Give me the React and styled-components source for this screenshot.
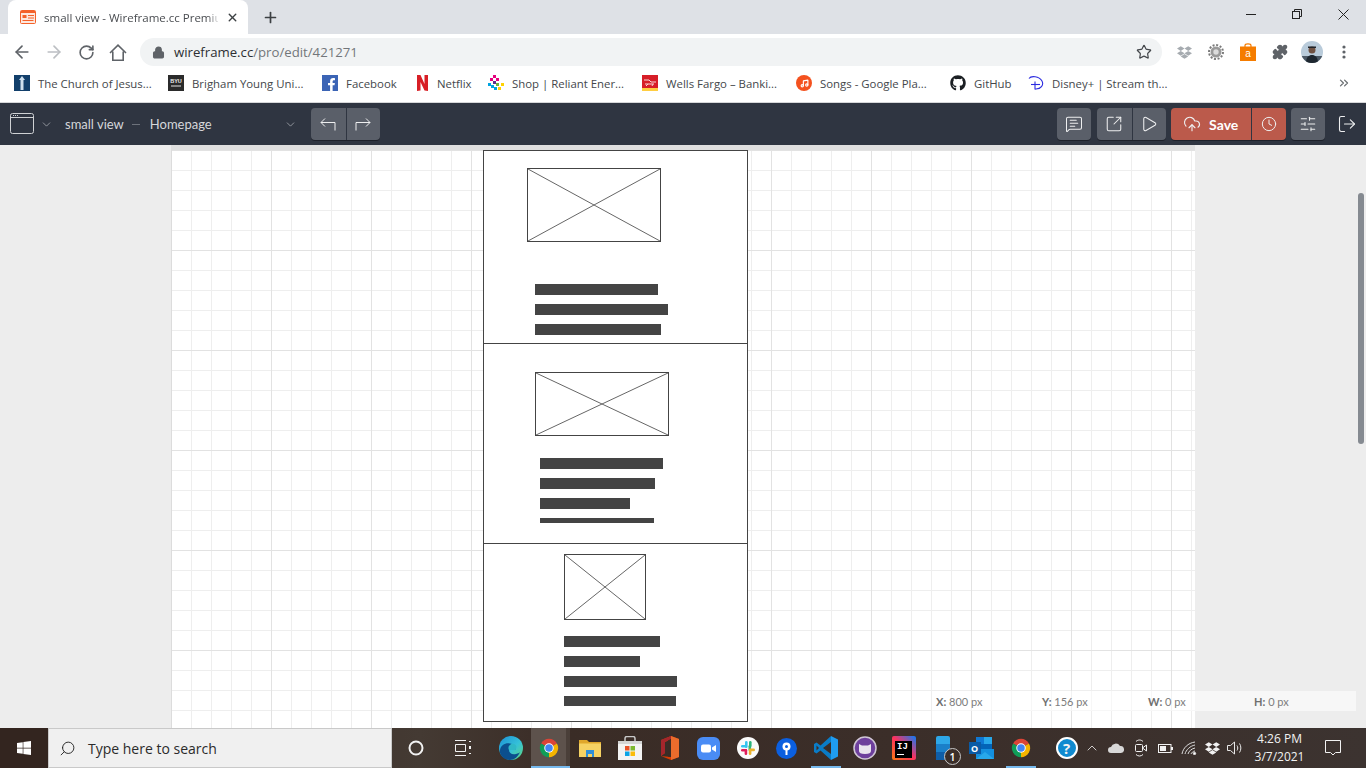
import styled, { createGlobalStyle } from "styled-components";
import {
  ArrowLeft,
  ArrowRight,
  RotateCw,
  Lock,
  Star,
  Puzzle,
  X,
  Plus,
  ChevronDown,
  ChevronUp,
  ChevronsRight,
  MessageSquareText,
  SquareArrowOutUpRight,
  Play,
  CloudUpload,
  Clock,
  SlidersHorizontal,
  LogOut,
  Search,
  Music,
} from "lucide-react";
import { FaGithub, FaDropbox, FaFacebookF, FaWindows } from "react-icons/fa";

const GlobalStyle = createGlobalStyle`
  html, body {
    margin: 0;
    padding: 0;
    overflow: hidden;
    background: #ededed;
  }
  * {
    box-sizing: border-box;
  }
`;

const uiFont = `"Open Sans", "Noto Sans", sans-serif`;

const Page = styled.div`
  width: 1366px;
  height: 768px;
  display: flex;
  flex-direction: column;
  overflow: hidden;
  font-family: ${uiFont};
`;

/* browser chrome */
const TabStrip = styled.div`
  height: 34px;
  flex: none;
  display: flex;
  align-items: center;
  background: #dee1e6;
  padding-left: 8px;
  color: #3c4043;
`;

const Tab = styled.div`
  width: 240px;
  height: 34px;
  display: flex;
  align-items: center;
  background: #fff;
  border-radius: 8px 8px 0 0;
  padding: 0 9px 0 12px;
`;

const TabTitle = styled.span`
  width: 174px;
  margin-left: 8px;
  font-size: 11.5px;
  white-space: nowrap;
  color: #4a4d51;
  mask-image: linear-gradient(to right, #000 164px, transparent 176px);
`;

const NewTab = styled.div`
  display: flex;
  margin-left: 14px;
  color: #3c4043;
`;

const WindowControls = styled.div`
  margin-left: auto;
  display: flex;
  align-self: flex-start;
`;

const WindowButton = styled.div`
  width: 46px;
  height: 28px;
  display: flex;
  align-items: center;
  justify-content: center;
`;

const Toolbar = styled.div`
  height: 32px;
  flex: none;
  display: flex;
  align-items: flex-end;
  background: #fff;
  padding-left: 6px;
`;

const NavButton = styled.div`
  width: 32px;
  height: 28px;
  display: flex;
  align-items: center;
  justify-content: center;
  color: ${(p) => (p.$off ? "#bcbfc3" : "#5f6368")};
`;

const Omnibox = styled.div`
  width: 1022px;
  height: 28px;
  margin-left: 6px;
  margin-right: 6px;
  display: flex;
  align-items: center;
  border-radius: 14px;
  background: #f1f3f4;
  padding: 0 10px 0 12px;
  color: #5f6368;
`;

const Url = styled.span`
  margin-left: 9px;
  font-size: 13.2px;
  color: #72767a;
  strong {
    font-weight: 400;
    color: #2d2f33;
  }
`;

const StarSlot = styled.div`
  margin-left: auto;
  display: flex;
  color: #44474b;
`;

const Extension = styled.div`
  width: 32px;
  height: 28px;
  display: flex;
  align-items: center;
  justify-content: center;
`;

const Bookmarks = styled.div`
  height: 36px;
  flex: none;
  display: flex;
  align-items: center;
  padding: 0 0 2px 14px;
  background: #fff;
`;

const Bookmark = styled.div`
  width: ${(p) => p.$w}px;
  flex: none;
  display: flex;
  align-items: center;
  gap: 8px;
  font-size: 11.4px;
  color: #44474b;
  white-space: nowrap;
`;

const BookmarkIcon = styled.span`
  width: ${(p) => p.$size || 16}px;
  height: 16px;
  flex: none;
  display: flex;
  align-items: center;
  justify-content: center;
  background: ${(p) => p.$bg || "transparent"};
  border-radius: ${(p) => p.$round || 0};
  color: #fff;
`;

const MoreBookmarks = styled.div`
  margin-left: auto;
  margin-right: 15px;
  display: flex;
  color: #6b6f73;
`;

/* wireframe.cc editor bar */
const EditorBar = styled.div`
  height: 43px;
  flex: none;
  display: flex;
  align-items: center;
  border-top: 1px solid #d6d7d9;
  background: #2f3541;
  padding-left: 10px;
  font-family: Lato, ${uiFont};
  color: #d5d7da;
  box-shadow: 0 1px 1px rgba(0, 0, 0, 0.3);
  position: relative;
`;

const PageName = styled.span`
  font-size: 13px;
  margin-left: ${(p) => p.$gap}px;
`;

const Dash = styled.span`
  width: 8px;
  height: 1px;
  margin-left: 8px;
  background: #6d727b;
`;

const Caret = styled.span`
  display: flex;
  margin-left: ${(p) => p.$gap}px;
  color: #c3c6ca;
`;

const ButtonGroup = styled.div`
  height: 32px;
  display: flex;
  margin-left: ${(p) => p.$gap}px;
  border-radius: 4px;
  overflow: hidden;
  background: ${(p) => (p.$save ? "#bb5a4b" : "#5a5f69")};
  box-shadow: 0 1px 0 #1d212a;
`;

const ToolButton = styled.div`
  width: ${(p) => p.$w || 34}px;
  display: flex;
  align-items: center;
  justify-content: center;
  gap: 8px;
  font-size: 14px;
  font-weight: 700;
  color: #fff;
  & + & {
    border-left: 1px solid #2f3541;
  }
  svg {
    color: #eeeff0;
  }
`;

const ExitButton = styled.div`
  display: flex;
  margin-left: 12px;
  color: #eeeff0;
`;

/* drawing area */
const Workspace = styled.div`
  flex: 1;
  min-height: 0;
  display: flex;
  background: #ededed;
  padding-left: 171px;
  position: relative;
`;

const CanvasColumn = styled.div`
  width: 1024px;
  padding-top: 5px;
  background: #dfdfdf;
`;

const Canvas = styled.div`
  position: relative;
  height: 100%;
  overflow: hidden;
  border-left: 1px solid #dcdcdc;
  background-color: #fff;
  background-image:
    linear-gradient(to right, #e2e2e2 1px, transparent 1px),
    linear-gradient(to bottom, #e2e2e2 1px, transparent 1px),
    linear-gradient(to right, #eeeeee 1px, transparent 1px),
    linear-gradient(to bottom, #eeeeee 1px, transparent 1px);
  background-size: 100px 100px, 100px 100px, 20px 20px, 20px 20px;
  background-position: -1px 0, -1px 0, -1px 0, -1px 0;
`;

const WireFrame = styled.div`
  position: absolute;
  left: ${(p) => p.$x - 172}px;
  top: ${(p) => p.$y - 150}px;
  width: ${(p) => p.$w}px;
  height: ${(p) => p.$h}px;
  border: 1px solid #444;
  background: #fff;
`;

const WireLine = styled.div`
  position: absolute;
  left: ${(p) => p.$x - 172}px;
  top: ${(p) => p.$y - 150}px;
  width: ${(p) => p.$w}px;
  height: 1px;
  background: #444;
`;

const WireBar = styled.div`
  position: absolute;
  left: ${(p) => p.$x - 172}px;
  top: ${(p) => p.$y - 150}px;
  width: ${(p) => p.$w}px;
  height: ${(p) => p.$h}px;
  background: #444;
`;

const WireImage = styled.svg`
  position: absolute;
  left: ${(p) => p.$x - 172}px;
  top: ${(p) => p.$y - 150}px;
  border: 1px solid #444;
  background: #fff;
`;

const Readout = styled.div`
  position: absolute;
  left: 932px;
  top: 546px;
  width: 424px;
  height: 20px;
  display: flex;
  align-items: center;
  padding-top: 1px;
  background: rgba(255, 255, 255, 0.55);
  font-family: Lato, ${uiFont};
  font-size: 11px;
  color: #7d7d7d;
`;

const ReadoutCell = styled.span`
  width: 106px;
  padding-left: 4px;
  b {
    color: #6f6f6f;
  }
`;

const ScrollThumb = styled.div`
  position: absolute;
  left: 1358px;
  top: 48px;
  width: 6px;
  height: 251px;
  border-radius: 3px;
  background: #858a91;
`;

/* windows taskbar */
const Taskbar = styled.div`
  height: 40px;
  flex: none;
  display: flex;
  align-items: stretch;
  background: linear-gradient(to right, #33251f 0, #33251f 48px, #443a33 420px, #3a2c26 560px, #3b2e29 900px, #3c3330 100%);
  color: #fff;
`;

const StartButton = styled.div`
  width: 48px;
  flex: none;
  display: flex;
  align-items: center;
  justify-content: center;
`;

const SearchBox = styled.div`
  width: 344px;
  flex: none;
  display: flex;
  align-items: center;
  padding-left: 10px;
  background: #f0f0f0;
  border: 1px solid #c9c9c9;
  color: #2b2b2b;
  font-size: 14px;
`;

const SearchText = styled.span`
  margin-left: 12px;
`;

const Slot = styled.div`
  width: ${(p) => p.$w || 39}px;
  flex: none;
  display: flex;
  align-items: center;
  justify-content: center;
  position: relative;
  padding-left: ${(p) => p.$pl || 0}px;
  padding-right: ${(p) => p.$pr || 0}px;
  background: ${(p) => (p.$active ? "linear-gradient(to right, #5d524c 35px, #4a3f39 35px)" : "transparent")};
  &::after {
    content: "";
    display: ${(p) => (p.$open || p.$active ? "block" : "none")};
    position: absolute;
    bottom: 0;
    left: ${(p) => (p.$active ? 0 : 5)}px;
    right: ${(p) => (p.$active ? 0 : 4)}px;
    height: 2px;
    background: #76b9ed;
  }
`;

const Tray = styled.div`
  margin-left: auto;
  display: flex;
  align-items: stretch;
  padding-right: 8px;
  color: #f2f2f2;
`;

const ClockText = styled.div`
  width: 65px;
  display: flex;
  flex-direction: column;
  align-items: center;
  justify-content: center;
  gap: 4px;
  font-size: 12px;
  line-height: 14px;
  text-align: center;
`;

const ChromeLogo = ({ size = 22 }) => (
  <svg width={size} height={size} viewBox="0 0 24 24">
    <path d="M12 12 3.34 7A10 10 0 0 1 20.66 7Z" fill="#db4437" />
    <path d="M12 12V22A10 10 0 0 1 3.34 7Z" fill="#0f9d58" />
    <path d="M12 12 20.66 7A10 10 0 0 1 12 22Z" fill="#f4b400" />
    <circle cx="12" cy="12" r="5.2" fill="#fff" />
    <circle cx="12" cy="12" r="4.1" fill="#4285f4" />
  </svg>
);

const EdgeLogo = () => (
  <svg width="24" height="24" viewBox="0 0 24 24">
    <defs>
      <linearGradient id="edgeFill" x1="0" y1="0" x2="1" y2="1">
        <stop offset="0" stopColor="#1c8fd6" />
        <stop offset="0.55" stopColor="#35c1d8" />
        <stop offset="1" stopColor="#5fd87c" />
      </linearGradient>
    </defs>
    <circle cx="12" cy="12" r="12" fill="url(#edgeFill)" />
    <path d="M1 14C2 8 8 6 13 8c3 1.300 4 4 3 6h-6c0 3 3 5 7 4 2-.5 3-1 4-2-2 5-6 8-10 8C5 24 0 19 1 14Z" fill="#0c4f8e" />
    <path d="M10 14c-2-4 2-7 5-6 3 1 3 4 1 6Z" fill="#2fb8c6" />
  </svg>
);

const FolderLogo = () => (
  <svg width="22" height="18" viewBox="0 0 22 18">
    <path d="M0 1h8l2 2h12v15H0Z" fill="#e0a72b" />
    <path d="M0 4.500h22V18H0Z" fill="#f6d263" />
    <path d="M7 11h8v7h-2v-3H9v3H7Z" fill="#2f8fd8" />
  </svg>
);

const StoreLogo = () => (
  <svg width="24" height="24" viewBox="0 0 24 24">
    <path d="M7 6V2.500C7 1 8 .5 9 .5h6c1 0 2 .5 2 2V6" fill="none" stroke="#c8c8c8" strokeWidth="1.500" />
    <path d="M0 5h24v19H0Z" fill="#f3f3f3" />
    <path d="M0 5h24v3H0Z" fill="#d5d5d5" />
    <rect x="7" y="10" width="4.500" height="4.500" fill="#e8532a" />
    <rect x="12.500" y="10" width="4.500" height="4.500" fill="#7cb82f" />
    <rect x="7" y="15.500" width="4.500" height="4.500" fill="#0aa3e6" />
    <rect x="12.500" y="15.500" width="4.500" height="4.500" fill="#fbbc09" />
  </svg>
);

const OfficeLogo = () => (
  <svg width="20" height="24" viewBox="0 0 20 24">
    <path d="M11 0 19 3V21L11 24 1 20 11 21V3L5 6V17L1 20V4Z" fill="#d83b01" />
    <path d="M11 0 19 3V21L11 24Z" fill="#eb6c2c" />
    <path d="M11 3 5 6V17L1 20V4L11 0Z" fill="#a4262c" />
    <path d="M11 3V21L8 20.500V4.500Z" fill="#3a2c26" />
  </svg>
);

const ZoomLogo = () => (
  <svg width="23" height="23" viewBox="0 0 23 23">
    <rect width="23" height="23" rx="6" fill="#4a8cf5" />
    <rect x="4" y="7.500" width="10" height="8" rx="2" fill="#fff" />
    <path d="M15 10.500 19 8v7l-4-2.500Z" fill="#fff" />
  </svg>
);

const SlackLogo = () => (
  <svg width="22" height="22" viewBox="0 0 22 22">
    <circle cx="11" cy="11" r="11" fill="#fbfbfb" />
    <rect x="8" y="4" width="2.600" height="7" rx="1.300" fill="#36c5f0" />
    <rect x="4" y="8" width="6" height="2.600" rx="1.300" fill="#36c5f0" />
    <rect x="11.500" y="8" width="2.600" height="6" rx="1.300" fill="#2eb67d" />
    <rect x="12" y="4" width="2.600" height="6" rx="1.300" fill="#2eb67d" />
    <rect x="12" y="11.600" width="6" height="2.600" rx="1.300" fill="#ecb22e" />
    <rect x="11.800" y="12" width="2.600" height="6" rx="1.300" fill="#ecb22e" />
    <rect x="4" y="12" width="6" height="2.600" rx="1.300" fill="#e01e5a" />
    <rect x="7.600" y="12" width="2.600" height="6" rx="1.300" fill="#e01e5a" />
  </svg>
);

const PinLogo = () => (
  <svg width="21" height="21" viewBox="0 0 21 21">
    <circle cx="10.500" cy="10.500" r="10.500" fill="#0b5fe0" />
    <circle cx="10.500" cy="8.500" r="4" fill="#fff" />
    <circle cx="10.500" cy="8.500" r="1.500" fill="#0b5fe0" />
    <rect x="9.500" y="11" width="2" height="6" fill="#fff" />
  </svg>
);

const CodeLogo = () => (
  <svg width="24" height="24" viewBox="0 0 24 24">
    <path d="M17 0 24 3.500V20.500L17 24Z" fill="#1f9cf0" />
    <path d="M17 0V6L9 12 17 18V24L6.500 14.500 2.500 17.500 0 16V8L2.500 6.500 6.500 9.500Z" fill="#0a7cc7" />
    <path d="M2.500 9.500 5 12 2.500 14.500Z" fill="#3a2c26" />
    <path d="M17 8.500V15.500L12.500 12Z" fill="#3a2c26" />
  </svg>
);

const CatLogo = () => (
  <svg width="24" height="24" viewBox="0 0 24 24">
    <circle cx="12" cy="12" r="11" fill="#6d3f9c" stroke="#cfc6d4" strokeWidth="1.500" />
    <path d="M6 8 9 9.500h6L18 8v7c0 2-2 3-6 3s-6-1-6-3Z" fill="#e9e4ee" />
  </svg>
);

const IdeaBox = styled.div`
  width: 24px;
  height: 24px;
  display: flex;
  align-items: flex-end;
  justify-content: center;
  padding-bottom: 2px;
  border-radius: 2px;
  background: linear-gradient(45deg, #f97a12 0, #fe315d 50%, #087cfa 100%);
`;

const IdeaText = styled.span`
  width: 17px;
  height: 17px;
  padding: 2px;
  background: #000;
  font-family: "Liberation Mono", monospace;
  font-size: 9px;
  font-weight: 700;
  line-height: 9px;
  color: #fff;
  &::after {
    content: "";
    display: block;
    width: 7px;
    height: 1px;
    margin-top: 2px;
    background: #fff;
  }
`;

const IdeaLogo = () => (
  <IdeaBox>
    <IdeaText>IJ</IdeaText>
  </IdeaBox>
);

const PhoneBadge = styled.span`
  position: absolute;
  right: 1px;
  bottom: 3px;
  width: 17px;
  height: 17px;
  display: flex;
  align-items: center;
  justify-content: center;
  border-radius: 50%;
  border: 1px solid #c8c8c8;
  background: #3b2e29;
  font-size: 10.5px;
  font-weight: 600;
`;

const PhoneLogo = () => (
  <svg width="14" height="24" viewBox="0 0 14 24">
    <rect width="14" height="24" rx="2" fill="#2ea7e8" />
    <rect y="8" width="14" height="8" fill="#1a7fc9" />
    <rect y="16" width="14" height="8" fill="#0f5ea8" />
  </svg>
);

const OutlookWrap = styled.div`
  position: relative;
  width: 24px;
  height: 22px;
`;

const OutlookMark = styled.span`
  position: absolute;
  left: -1px;
  top: 5px;
  width: 12px;
  height: 12px;
  display: flex;
  align-items: center;
  justify-content: center;
  background: #0a5ba6;
  font-size: 9px;
  font-weight: 700;
`;

const OutlookLogo = () => (
  <OutlookWrap>
    <svg width="24" height="22" viewBox="0 0 24 22">
      <rect x="6" width="16" height="8" fill="#0f78d4" />
      <rect x="14" width="8" height="8" fill="#28a8ea" />
      <rect x="6" y="7" width="16" height="8" fill="#0364b8" />
      <path d="M6 12 24 12V22H6Z" fill="#1490df" />
      <path d="M6 22 15 15 24 22Z" fill="#28a8ea" />
    </svg>
    <OutlookMark>O</OutlookMark>
  </OutlookWrap>
);

const HelpMark = styled.span`
  width: 22px;
  height: 22px;
  display: flex;
  align-items: center;
  justify-content: center;
  border-radius: 50%;
  border: 2px solid #fff;
  background: #0f8ad0;
  font-size: 15px;
  font-weight: 700;
`;

const screens = {
  images: [
    { x: 527, y: 168, w: 134, h: 74 },
    { x: 535, y: 372, w: 134, h: 64 },
    { x: 564, y: 554, w: 82, h: 66 },
  ],
  bars: [
    { x: 535, y: 284, w: 123, h: 11 },
    { x: 535, y: 304, w: 133, h: 11 },
    { x: 535, y: 324, w: 126, h: 11 },
    { x: 540, y: 458, w: 123, h: 11 },
    { x: 540, y: 478, w: 115, h: 11 },
    { x: 540, y: 498, w: 90, h: 11 },
    { x: 540, y: 518, w: 114, h: 5 },
    { x: 564, y: 636, w: 96, h: 11 },
    { x: 564, y: 656, w: 76, h: 11 },
    { x: 564, y: 676, w: 113, h: 11 },
    { x: 564, y: 696, w: 112, h: 10 },
  ],
};

const bookmarks = [
  {
    w: 154,
    label: "The Church of Jesus...",
    icon: (
      <BookmarkIcon $bg="#123f6b">
        <svg width="10" height="14" viewBox="0 0 10 14">
          <path d="M5 0 8 4H6.500V14h-3V4H2Z" fill="#cfe0ee" />
        </svg>
      </BookmarkIcon>
    ),
  },
  {
    w: 154,
    label: "Brigham Young Uni...",
    icon: (
      <BookmarkIcon $bg="#2b2b2b">
        <svg width="16" height="16" viewBox="0 0 16 16">
          <text x="8" y="8" fontSize="5.500" fontWeight="700" fill="#eee" textAnchor="middle" fontFamily="Liberation Sans">BYU</text>
          <rect x="3" y="10" width="10" height="2" fill="#888" />
        </svg>
      </BookmarkIcon>
    ),
  },
  {
    w: 93,
    label: "Facebook",
    icon: (
      <BookmarkIcon $bg="#3b64b5">
        <FaFacebookF size={13} style={{ marginTop: 3, marginLeft: 3 }} />
      </BookmarkIcon>
    ),
  },
  {
    w: 73,
    label: "Netflix",
    icon: (
      <BookmarkIcon $size={14}>
        <svg width="11" height="16" viewBox="0 0 11 16">
          <path d="M0 0h3.500L7.500 9V0H11v16l-3.500-.5L3.500 7v8.500L0 16Z" fill="#d81f26" />
        </svg>
      </BookmarkIcon>
    ),
  },
  {
    w: 154,
    label: "Shop | Reliant Ener...",
    icon: (
      <BookmarkIcon>
        <svg width="16" height="16" viewBox="0 0 16 16">
          <rect x="5" y="0" width="3" height="3" fill="#e6007e" />
          <rect x="2" y="3" width="3" height="3" fill="#e6007e" />
          <rect x="8" y="3" width="3" height="3" fill="#e6007e" />
          <rect x="5" y="6" width="3" height="3" fill="#5b2d8e" />
          <rect x="0" y="8" width="3" height="3" fill="#00a3e0" />
          <rect x="3" y="10" width="3" height="3" fill="#00a3e0" />
          <rect x="6" y="12" width="3" height="3" fill="#00a3e0" />
          <rect x="8" y="8" width="3" height="3" fill="#6cb33f" />
          <rect x="13" y="8" width="3" height="3" fill="#ffd200" />
          <rect x="10" y="12" width="3" height="3" fill="#ffd200" />
        </svg>
      </BookmarkIcon>
    ),
  },
  {
    w: 154,
    label: "Wells Fargo – Banki...",
    icon: (
      <BookmarkIcon $bg="#d71e28">
        <svg width="16" height="16" viewBox="0 0 16 16">
          <path d="M2 5h5l2 2h5M3 9h9M4 11l2-2M10 11l1-2" stroke="#f6d6d6" strokeWidth="1" fill="none" />
          <rect y="13" width="16" height="3" fill="#ffcd41" />
        </svg>
      </BookmarkIcon>
    ),
  },
  {
    w: 154,
    label: "Songs - Google Pla...",
    icon: (
      <BookmarkIcon $bg="#f4511e" $round="50%">
        <Music size={9} strokeWidth={3} />
      </BookmarkIcon>
    ),
  },
  {
    w: 78,
    label: "GitHub",
    icon: (
      <BookmarkIcon>
        <FaGithub size={16} color="#1b1f23" />
      </BookmarkIcon>
    ),
  },
  {
    w: 160,
    label: "Disney+ | Stream th...",
    icon: (
      <BookmarkIcon>
        <svg width="16" height="16" viewBox="0 0 16 16" fill="none" stroke="#2b2be0" strokeWidth="1.100">
          <path d="M1 3.500C3 .5 11 1 14 6c2 4-1 8.500-7 8" />
          <path d="M7 6.500V14.500" />
          <path d="M3 9.500h9" />
        </svg>
      </BookmarkIcon>
    ),
  },
];

export default function App() {
  return (
    <Page>
      <GlobalStyle />

      <TabStrip>
        <Tab>
          <svg width="16" height="14" viewBox="0 0 16 14">
            <rect x="0.5" y="0.5" width="15" height="13" rx="1" fill="#fde8df" stroke="#f4622a" />
            <rect x="1" y="1" width="14" height="2" fill="#f4622a" />
            <rect x="2.500" y="5" width="4" height="3" fill="#f4622a" />
            <rect x="8" y="5" width="6" height="1" fill="#f4622a" />
            <rect x="8" y="7.500" width="6" height="1" fill="#f4622a" />
            <rect x="2.500" y="10" width="11" height="1" fill="#f4622a" />
          </svg>
          <TabTitle>small view - Wireframe.cc Premiu</TabTitle>
          <X size={13} strokeWidth={2.6} style={{ marginLeft: 8 }} />
        </Tab>
        <NewTab>
          <Plus size={17} strokeWidth={2.4} />
        </NewTab>
        <WindowControls>
          <WindowButton>
            <svg width="10" height="10" viewBox="0 0 10 10"><path d="M0 5.500h10" stroke="#222" /></svg>
          </WindowButton>
          <WindowButton>
            <svg width="10" height="10" viewBox="0 0 10 10" fill="none" stroke="#222">
              <rect x="0.5" y="2.500" width="7" height="7" />
              <path d="M2.500 2.500V.5h7v7h-2" />
            </svg>
          </WindowButton>
          <WindowButton>
            <svg width="11" height="11" viewBox="0 0 11 11"><path d="M.5.5l10 10M10.500.5l-10 10" stroke="#222" /></svg>
          </WindowButton>
        </WindowControls>
      </TabStrip>

      <Toolbar>
        <NavButton><ArrowLeft size={20} strokeWidth={2} /></NavButton>
        <NavButton $off><ArrowRight size={20} strokeWidth={2} /></NavButton>
        <NavButton><RotateCw size={17} strokeWidth={2.3} /></NavButton>
        <NavButton>
          <svg width="18" height="17" viewBox="0 0 18 17" fill="none" stroke="#5f6368" strokeWidth="1.600">
            <path d="M1 9 9 1.200 17 9M3.800 7.500v8.700h10.400V7.500" />
          </svg>
        </NavButton>
        <Omnibox>
          <Lock size={13} strokeWidth={2.4} fill="#5f6368" />
          <Url><strong>wireframe.cc</strong>/pro/edit/421271</Url>
          <StarSlot><Star size={16} strokeWidth={1.8} /></StarSlot>
        </Omnibox>
        <Extension>
          <FaDropbox size={15} color="#a6abb0" />
        </Extension>
        <Extension>
          <svg width="16" height="16" viewBox="0 0 16 16">
            <circle cx="8" cy="8" r="7" fill="none" stroke="#7a7a7a" strokeWidth="2" strokeDasharray="2 1.660" />
            <circle cx="8" cy="8" r="5.500" fill="#9a9a9a" />
            <circle cx="8" cy="8" r="2.700" fill="#dcdcdc" />
          </svg>
        </Extension>
        <Extension>
          <svg width="16" height="18" viewBox="0 0 16 18">
            <path d="M5 4V2.500C5 1 6 .8 8 .8s3 .2 3 1.700V4" fill="none" stroke="#f57c00" strokeWidth="1.200" />
            <rect y="3.500" width="16" height="14.500" fill="#f57c00" />
            <text x="8" y="14" fontSize="10" fill="#fff" textAnchor="middle" fontFamily="Liberation Sans">a</text>
          </svg>
        </Extension>
        <Extension>
          <Puzzle size={16} color="#5f6368" fill="#5f6368" />
        </Extension>
        <Extension>
          <svg width="22" height="22" viewBox="0 0 22 22">
            <defs>
              <clipPath id="avatarClip"><circle cx="11" cy="11" r="11" /></clipPath>
            </defs>
            <g clipPath="url(#avatarClip)">
              <rect width="22" height="22" fill="#b9cbda" />
              <rect y="15" width="22" height="7" fill="#4c5966" />
              <circle cx="11" cy="9" r="3.500" fill="#6f5142" />
              <path d="M7 7h8V5.500H7Z" fill="#20242a" />
              <path d="M5 22c0-6 3-8 6-8s6 2 6 8Z" fill="#1e2730" />
            </g>
          </svg>
        </Extension>
        <Extension>
          <svg width="4" height="14" viewBox="0 0 4 14" fill="#5f6368">
            <circle cx="2" cy="2" r="1.600" />
            <circle cx="2" cy="7" r="1.600" />
            <circle cx="2" cy="12" r="1.600" />
          </svg>
        </Extension>
      </Toolbar>

      <Bookmarks>
        {bookmarks.map((b) => (
          <Bookmark key={b.label} $w={b.w}>
            {b.icon}
            {b.label}
          </Bookmark>
        ))}
        <MoreBookmarks><ChevronsRight size={14} strokeWidth={2.2} /></MoreBookmarks>
      </Bookmarks>

      <EditorBar>
        <svg width="24" height="22" viewBox="0 0 24 22" fill="none" stroke="#cfd1d4" strokeWidth="1">
          <rect x="0.5" y="0.5" width="23" height="20" rx="2" />
          <path d="M1 4.500h22" />
          <path d="M3 2.500h1M5 2.500h1M7 2.500h1" />
        </svg>
        <Caret $gap={6}><ChevronDown size={13} strokeWidth={1.2} /></Caret>
        <PageName $gap={12}>small view</PageName>
        <Dash />
        <PageName $gap={10}>Homepage</PageName>
        <Caret $gap={72}><ChevronDown size={13} strokeWidth={1.2} /></Caret>
        <ButtonGroup $gap={14}>
          <ToolButton $w={35}>
            <svg width="16" height="14" viewBox="0 0 16 14" fill="none" stroke="#eeeff0">
              <path d="M15 13.500V5.500H1M5 1.500 1 5.500l4 4" />
            </svg>
          </ToolButton>
          <ToolButton>
            <svg width="16" height="14" viewBox="0 0 16 14" fill="none" stroke="#eeeff0">
              <path d="M1 13.500V5.500H15M11 1.500l4 4-4 4" />
            </svg>
          </ToolButton>
        </ButtonGroup>
        <ButtonGroup $gap={677}>
          <ToolButton><MessageSquareText size={18} strokeWidth={1.4} /></ToolButton>
        </ButtonGroup>
        <ButtonGroup $gap={6}>
          <ToolButton $w={35}><SquareArrowOutUpRight size={18} strokeWidth={1.4} /></ToolButton>
          <ToolButton $w={34}><Play size={18} strokeWidth={1.4} /></ToolButton>
        </ButtonGroup>
        <ButtonGroup $gap={5} $save>
          <ToolButton $w={80}><CloudUpload size={18} strokeWidth={1.5} />Save</ToolButton>
          <ToolButton $w={35}><Clock size={16} strokeWidth={1.5} /></ToolButton>
        </ButtonGroup>
        <ButtonGroup $gap={5}>
          <ToolButton><SlidersHorizontal size={18} strokeWidth={1.4} /></ToolButton>
        </ButtonGroup>
        <ExitButton><LogOut size={20} strokeWidth={1.3} /></ExitButton>
      </EditorBar>

      <Workspace>
        <CanvasColumn>
          <Canvas>
            <WireFrame $x={483} $y={150} $w={265} $h={572} />
            <WireLine $x={483} $y={343} $w={265} />
            <WireLine $x={483} $y={543} $w={265} />
            {screens.images.map((m) => (
              <WireImage key={m.y} $x={m.x} $y={m.y} width={m.w} height={m.h} preserveAspectRatio="none" viewBox="0 0 100 100">
                <path d="M0 0 100 100M100 0 0 100" stroke="#666" strokeWidth="1" vectorEffect="non-scaling-stroke" />
              </WireImage>
            ))}
            {screens.bars.map((b) => (
              <WireBar key={b.y} $x={b.x} $y={b.y} $w={b.w} $h={b.h} />
            ))}
          </Canvas>
        </CanvasColumn>
        <Readout>
          <ReadoutCell><b>X:</b> 800 px</ReadoutCell>
          <ReadoutCell><b>Y:</b> 156 px</ReadoutCell>
          <ReadoutCell><b>W:</b> 0 px</ReadoutCell>
          <ReadoutCell><b>H:</b> 0 px</ReadoutCell>
        </Readout>
        <ScrollThumb />
      </Workspace>

      <Taskbar>
        <StartButton><FaWindows size={16} /></StartButton>
        <SearchBox>
          <Search size={17} strokeWidth={1.3} color="#222" style={{ transform: "scaleX(-1)" }} />
          <SearchText>Type here to search</SearchText>
        </SearchBox>
        <Slot $w={48}>
          <svg width="16" height="16" viewBox="0 0 16 16">
            <circle cx="8" cy="8" r="6.500" fill="none" stroke="#f2f2f2" strokeWidth="2" />
          </svg>
        </Slot>
        <Slot $w={50.5} $pr={4}>
          <svg width="17" height="16" viewBox="0 0 17 16" fill="none" stroke="#f2f2f2">
            <path d="M0 .5h11M0 15.500h11M.5 4.500h10v7H.5Z" />
            <path d="M15 1v1M15 6v3M15 13v1" strokeWidth="2" />
          </svg>
        </Slot>
        <Slot $w={40.5}><EdgeLogo /></Slot>
        <Slot $active $pr={4}><ChromeLogo /></Slot>
        <Slot $w={40}><FolderLogo /></Slot>
        <Slot $w={40}><StoreLogo /></Slot>
        <Slot><OfficeLogo /></Slot>
        <Slot><ZoomLogo /></Slot>
        <Slot><SlackLogo /></Slot>
        <Slot><PinLogo /></Slot>
        <Slot $open><CodeLogo /></Slot>
        <Slot><CatLogo /></Slot>
        <Slot><IdeaLogo /></Slot>
        <Slot>
          <PhoneLogo />
          <PhoneBadge>1</PhoneBadge>
        </Slot>
        <Slot><OutlookLogo /></Slot>
        <Slot $open><ChromeLogo /></Slot>
        <Tray>
          <Slot $w={36} $pl={10}><HelpMark>?</HelpMark></Slot>
          <Slot $w={24.4}><ChevronUp size={16} strokeWidth={1.2} /></Slot>
          <Slot $w={24.4}>
            <svg width="16" height="10" viewBox="0 0 16 10">
              <path d="M3 10a3 3 0 0 1 0-6 5 5 0 0 1 9-1 3.500 3.500 0 0 1 1 7Z" fill="#d8d8d8" />
            </svg>
          </Slot>
          <Slot $w={24.4}>
            <svg width="14" height="18" viewBox="0 0 14 18" fill="none" stroke="#f2f2f2">
              <rect x="1.500" y="5.500" width="7" height="7" rx="1" />
              <path d="M8.500 9l4-3v6l-4-3ZM2 2.500c2-2 5-2 7 0M2 15.500c2 2 5 2 7 0" />
            </svg>
          </Slot>
          <Slot $w={24.4}>
            <svg width="15" height="9" viewBox="0 0 15 9" fill="none" stroke="#f2f2f2">
              <rect x="0.500" y="0.500" width="12.500" height="8" />
              <rect x="2" y="2" width="6" height="5" fill="#f2f2f2" stroke="none" />
              <path d="M14 3v3" strokeWidth="2" />
            </svg>
          </Slot>
          <Slot $w={24.4}>
            <svg width="16" height="14" viewBox="0 0 16 14" fill="none" stroke="#dcdcdc">
              <path d="M1 13C2 7 7 2 14 1M4 13c1-4 5-8 10-9M7 13c1-3 3-5 7-6M10 13c.5-1 2-3 4-3" />
              <circle cx="13.500" cy="12.500" r="1.200" fill="#fff" />
            </svg>
          </Slot>
          <Slot $w={21}><FaDropbox size={15} /></Slot>
          <Slot $w={24.4}>
            <svg width="16" height="14" viewBox="0 0 16 14" fill="none" stroke="#e8e8e8">
              <path d="M.5 4.500h3l4-3.500v12l-4-3.500h-3ZM10 4.500c1 1.500 1 3.500 0 5M12.500 2.500c1.800 2.500 1.800 6.500 0 9" />
            </svg>
          </Slot>
          <ClockText>
            <span>4:26 PM</span>
            <span>3/7/2021</span>
          </ClockText>
          <Slot $w={46} $pr={4}>
            <svg width="16" height="16" viewBox="0 0 16 16" fill="none" stroke="#f2f2f2">
              <path d="M.5.500h15v12h-5l-2.500 2.500-2.500-2.500h-5Z" />
            </svg>
          </Slot>
        </Tray>
      </Taskbar>
    </Page>
  );
}
